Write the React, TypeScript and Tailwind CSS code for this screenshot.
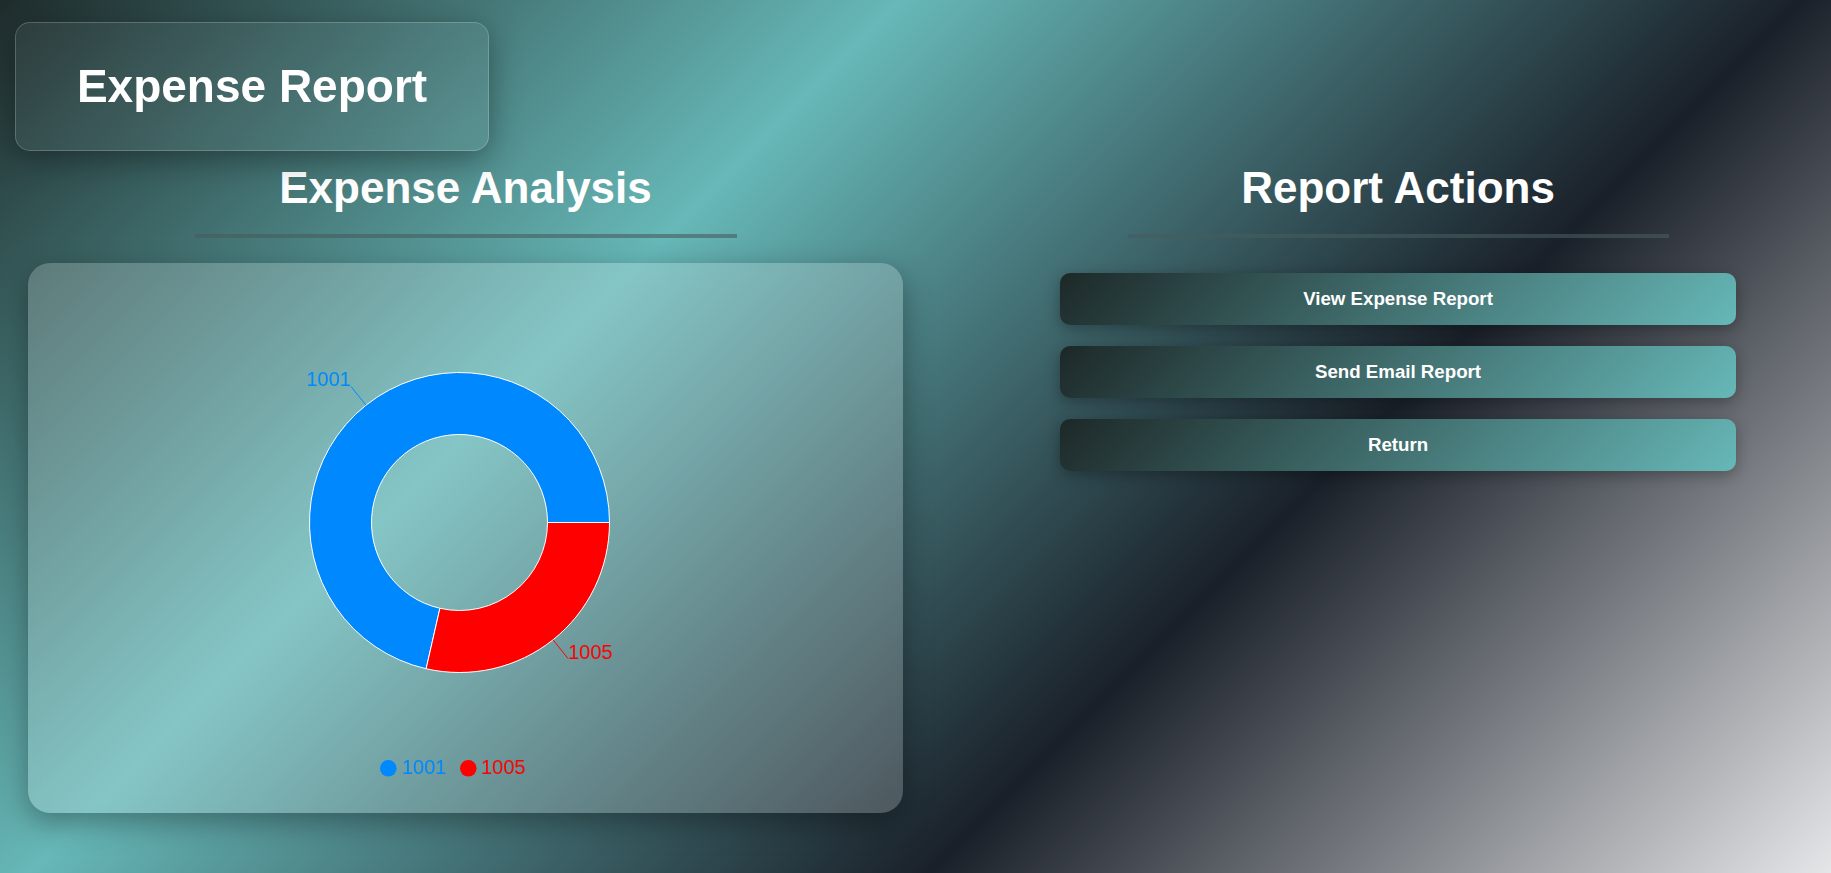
const cx = 431.5;
const cy = 259.5;
const R = 150;
const r = 88;

const slices = [
  { name: "1001", value: 5, color: "#0088FE" },
  { name: "1005", value: 2, color: "#FF0000" },
];

function pt(radius: number, deg: number) {
  const a = (deg * Math.PI) / 180;
  return [cx + radius * Math.cos(a), cy - radius * Math.sin(a)];
}

function arcPath(start: number, end: number) {
  const [ox1, oy1] = pt(R, start);
  const [ox2, oy2] = pt(R, end);
  const [ix1, iy1] = pt(r, start);
  const [ix2, iy2] = pt(r, end);
  const large = end - start > 180 ? 1 : 0;
  return `M${ox1},${oy1} A${R},${R} 0 ${large} 0 ${ox2},${oy2} L${ix2},${iy2} A${r},${r} 0 ${large} 1 ${ix1},${iy1} Z`;
}

function Donut() {
  const total = slices.reduce((s, d) => s + d.value, 0);
  let acc = 0;
  const parts = slices.map((d) => {
    const start = acc;
    const end = acc + (d.value / total) * 360;
    acc = end;
    return { ...d, start, end, mid: (start + end) / 2 };
  });

  return (
    <svg width={875} height={550} className="block">
      {parts.map((p) => (
        <path key={p.name} d={arcPath(p.start, p.end)} fill={p.color} stroke="#fff" strokeWidth={1} />
      ))}
      {parts.map((p) => {
        const [x1, y1] = pt(R, p.mid);
        const [x2, y2] = pt(174, p.mid);
        return (
          <g key={p.name}>
            <path d={`M${x1},${y1} L${x2},${y2}`} stroke={p.color} fill="none" />
            <text x={x2} y={y2} fill={p.color} fontSize={20} textAnchor={x2 > cx ? "start" : "end"}>
              {p.name}
            </text>
          </g>
        );
      })}
      {/* legend */}
      <circle cx={360.3} cy={505.3} r={8.3} fill="#0088FE" />
      <text x={374} y={511} fill="#0088FE" fontSize={20}>1001</text>
      <circle cx={440.3} cy={505.3} r={8.3} fill="#FF0000" />
      <text x={453} y={511} fill="#FF0000" fontSize={20}>1005</text>
    </svg>
  );
}

const actions = ["View Expense Report", "Send Email Report", "Return"];

export default function App() {
  return (
    <div className="h-screen w-full overflow-hidden bg-[linear-gradient(135deg,#1f2c2c,#67b8b8,#1a2029,#e5e6e8)] pt-[22px] font-['Liberation_Sans',Arial,sans-serif] text-white">
      <div className="ml-[15px] w-[474px] rounded-[15px] border border-white/20 bg-white/5 py-[37px] text-center text-[46px] font-bold leading-[1.15] shadow-[0_8px_32px_rgba(0,0,0,0.37)] backdrop-blur-md">
        Expense Report
      </div>

      <div className="mt-[12px] grid grid-cols-[875px_876px] gap-x-[57px] pl-[28px]">
        <section className="flex flex-col items-center">
          <h2 className="text-[44px] font-bold leading-[50px]">Expense Analysis</h2>
          <div className="mt-[21px] h-[4px] w-[542px] bg-[#465c5e]/60" />
          <div className="mt-[25px] h-[550px] w-[875px] rounded-[22px] bg-white/20 shadow-[0_10px_30px_rgba(0,0,0,0.35)] backdrop-blur-sm">
            <Donut />
          </div>
        </section>

        <section className="flex flex-col items-center">
          <h2 className="text-[44px] font-bold leading-[50px]">Report Actions</h2>
          <div className="mt-[21px] h-[4px] w-[541px] bg-[#465c5e]/60" />
          <div className="mt-[35px] flex w-[676px] flex-col gap-[21px]">
            {actions.map((label) => (
              <button
                key={label}
                type="button"
                className="h-[52px] w-full rounded-[10px] bg-[linear-gradient(135deg,#1d2828,#67b8b8)] text-[18.7px] font-bold text-white shadow-[0_4px_15px_rgba(0,0,0,0.3)]"
              >
                {label}
              </button>
            ))}
          </div>
        </section>
      </div>
    </div>
  );
}
